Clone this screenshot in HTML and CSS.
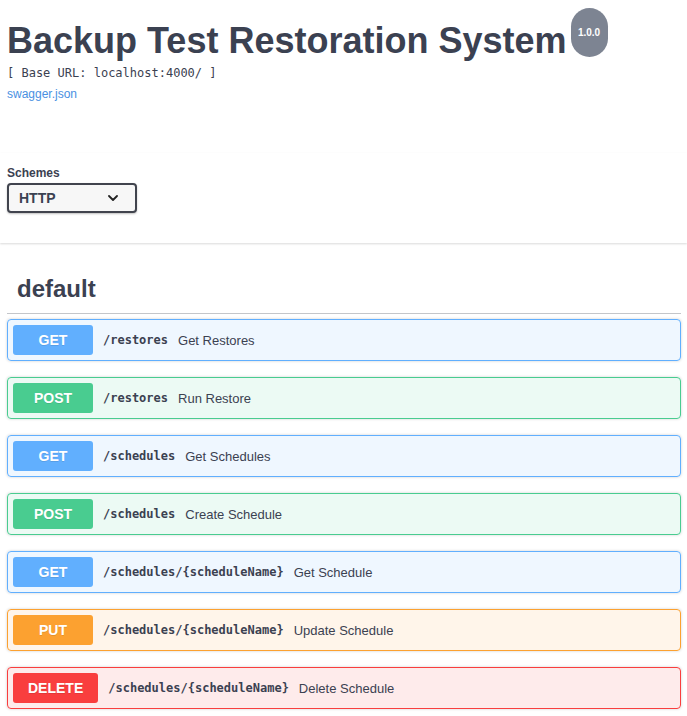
FILE: index.html
```html
<!DOCTYPE html>
<html lang="en">
<head>
<meta charset="utf-8">
<title>Backup Test Restoration System</title>
<link rel="stylesheet" href="styles.css">
</head>
<body>
<div class="info wrapper">
  <div class="title-row">
    <h2 class="title">Backup Test Restoration System</h2>
    <span class="version">1.0.0</span>
  </div>
  <pre class="base-url">[ Base URL: localhost:4000/ ]</pre>
  <a class="spec-link" href="#">swagger.json</a>
</div>

<div class="scheme-container">
  <div class="wrapper">
    <div class="schemes-title">Schemes</div>
    <div class="select">
      <span>HTTP</span>
      <svg class="chevron" width="10" height="6" viewBox="0 0 10 6"><path d="M1 1 L5 5 L9 1" fill="none" stroke="#222" stroke-width="1.8" stroke-linecap="round" stroke-linejoin="round"/></svg>
    </div>
  </div>
</div>

<div class="wrapper ops">
  <h3 class="opblock-tag">default</h3>

  <div class="opblock get">
    <span class="method">GET</span>
    <span class="path">/restores</span>
    <span class="desc">Get Restores</span>
  </div>
  <div class="opblock post">
    <span class="method">POST</span>
    <span class="path">/restores</span>
    <span class="desc">Run Restore</span>
  </div>
  <div class="opblock get">
    <span class="method">GET</span>
    <span class="path">/schedules</span>
    <span class="desc">Get Schedules</span>
  </div>
  <div class="opblock post">
    <span class="method">POST</span>
    <span class="path">/schedules</span>
    <span class="desc">Create Schedule</span>
  </div>
  <div class="opblock get">
    <span class="method">GET</span>
    <span class="path">/schedules/{scheduleName}</span>
    <span class="desc">Get Schedule</span>
  </div>
  <div class="opblock put">
    <span class="method">PUT</span>
    <span class="path">/schedules/{scheduleName}</span>
    <span class="desc">Update Schedule</span>
  </div>
  <div class="opblock delete">
    <span class="method">DELETE</span>
    <span class="path">/schedules/{scheduleName}</span>
    <span class="desc">Delete Schedule</span>
  </div>
</div>
</body>
</html>
```

FILE: styles.css
```css
html, body {
  margin: 0;
  padding: 0;
  background: #fff;
}
body {
  font-family: "Liberation Sans", Arial, sans-serif;
  color: #3b4151;
}
.wrapper {
  padding: 0 6px 0 7px;
}
.info {
  padding-top: 8px;
  padding-bottom: 52px;
}
.title-row {
  display: flex;
  align-items: flex-start;
}
.title {
  margin: 12px 0 0 0;
  font-size: 36px;
  font-weight: 700;
  color: #3b4151;
  line-height: 41px;
}
.version {
  margin-left: 4px;
  width: 37px;
  height: 49px;
  border-radius: 57px;
  background: #7d8492;
  color: #fff;
  font-size: 10px;
  font-weight: 700;
  display: flex;
  align-items: center;
  justify-content: center;
}
.base-url {
  margin: 5px 0 0 0;
  font-family: "DejaVu Sans Mono", monospace;
  font-size: 12px;
  line-height: 14px;
  color: #3b4151;
}
.spec-link {
  display: block;
  margin-top: 7px;
  font-size: 12px;
  line-height: 14px;
  color: #4990e2;
  text-decoration: none;
}
.scheme-container {
  box-shadow: 0 1px 2px 0 rgba(0,0,0,.15);
  padding: 13px 0 30px;
  margin-bottom: 22px;
}
.schemes-title {
  font-size: 12px;
  font-weight: 700;
  line-height: 14px;
  margin-bottom: 3px;
}
.select {
  box-sizing: border-box;
  width: 130px;
  height: 30px;
  border: 2px solid #41444e;
  border-radius: 4px;
  background: #f7f7f7;
  box-shadow: 0 1px 2px 0 rgba(0,0,0,.25);
  padding: 0 17px 0 10px;
  display: flex;
  align-items: center;
  justify-content: space-between;
  font-size: 14px;
  font-weight: 700;
  color: #3b4151;
}
.chevron {
  display: block;
}
.opblock-tag {
  margin: 0 0 5px;
  padding: 10px 20px 10px 10px;
  font-size: 24px;
  font-weight: 700;
  line-height: 28px;
  border-bottom: 1px solid rgba(59,65,81,.3);
  color: #3b4151;
}
.opblock {
  display: flex;
  align-items: center;
  padding: 5px;
  margin-bottom: 16px;
  border: 1px solid #000;
  border-radius: 4px;
  box-shadow: 0 0 3px rgba(0,0,0,.19);
}
.method {
  box-sizing: border-box;
  min-width: 80px;
  height: 30px;
  padding: 0 15px;
  border-radius: 3px;
  display: flex;
  align-items: center;
  justify-content: center;
  color: #fff;
  font-size: 14px;
  font-weight: 700;
  text-shadow: 0 1px 0 rgba(0,0,0,.1);
}
.path {
  padding: 0 10px;
  font-family: "DejaVu Sans Mono", monospace;
  font-size: 12px;
  font-weight: 700;
  color: #3b4151;
}
.desc {
  font-size: 13px;
  color: #3b4151;
}
.get { background: rgba(97,175,254,.1); border-color: #61affe; }
.get .method { background: #61affe; }
.post { background: rgba(73,204,144,.1); border-color: #49cc90; }
.post .method { background: #49cc90; }
.put { background: rgba(252,161,48,.1); border-color: #fca130; }
.put .method { background: #fca130; }
.delete { background: rgba(249,62,62,.1); border-color: #f93e3e; }
.delete .method { background: #f93e3e; }
```
